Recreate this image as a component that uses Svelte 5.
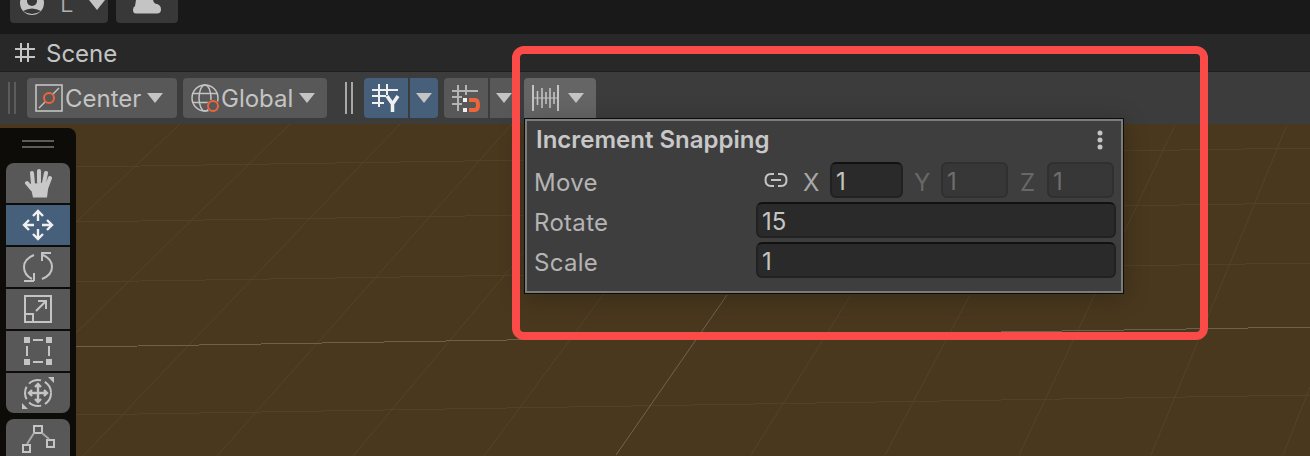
<script lang="ts">
  // perspective grid of the scene view, coordinates relative to the scene
  const horizontals = [
    [76, 43, 1310, 24],
    [76, 98, 1310, 79],
    [76, 158, 1310, 139],
    [76, 291, 1310, 271]
  ];
  const diagonals = [
    [180, 0, 76, 98],
    [290, 0, 76, 209],
    [400, 0, 83, 332],
    [512, 0, 217, 332],
    [530, 121, 353, 332],
    [640, 121, 484, 332],
    [851, 171, 751, 331],
    [970, 171, 885, 331],
    [1175, 1, 1019, 331],
    [1287, 1, 1151, 331],
    [1310, 263, 1283, 331]
  ];
</script>

<div class="app">
  <div class="topbar">
    <button class="top-btn account">
      <svg width="26" height="23" viewBox="0 0 26 23">
        <circle cx="13" cy="3" r="12" fill="#c4c4c4" />
        <circle cx="13" cy="1" r="5" fill="#383838" />
        <path d="M4 11 Q13 6 22 11 Q13 17 4 11Z" fill="#383838" />
      </svg>
      <span class="letter">L</span>
      <i class="caret top-caret"></i>
    </button>
    <button class="top-btn cloud">
      <svg width="28" height="14" viewBox="0 0 28 14">
        <path d="M3 13.500Q0 13.500 0 10Q0 7 2 6L3 0H20Q21 4 24 4Q28 5 28 9.500Q28 13.500 24 13.500Z" fill="#c4c4c4" />
      </svg>
    </button>
  </div>

  <div class="tabs">
    <svg class="hash" width="20" height="20" viewBox="0 0 20 20">
      <path d="M6 0V19M13 0V19M0 6H20M0 14H20" stroke="#c4c4c4" stroke-width="2" fill="none" />
    </svg>
    <span>Scene</span>
  </div>

  <div class="toolbar">
    <div class="handle dim"></div>
    <button class="tbtn center">
      <svg width="28" height="28" viewBox="0 0 28 28">
        <rect x="1" y="1" width="26" height="26" fill="none" stroke="#c4c4c4" stroke-width="1.600" />
        <path d="M4 24L10 18M18 10L24 4" stroke="#c4c4c4" stroke-width="1.400" />
        <circle cx="14" cy="14" r="5" fill="none" stroke="#f0643a" stroke-width="2" />
      </svg>
      <span>Center</span>
      <i class="caret"></i>
    </button>
    <button class="tbtn global">
      <svg width="28" height="28" viewBox="0 0 28 28">
        <g fill="none" stroke="#c4c4c4" stroke-width="1.500">
          <circle cx="14" cy="14" r="13" />
          <ellipse cx="14" cy="14" rx="6" ry="13" />
          <path d="M2 9.500H26M2 18.500H26" />
        </g>
        <circle cx="22" cy="22" r="6.500" fill="#585858" />
        <circle cx="22" cy="22" r="5" fill="none" stroke="#f0643a" stroke-width="2" />
      </svg>
      <span>Global</span>
      <i class="caret"></i>
    </button>
    <div class="handle"></div>

    <div class="split">
      <button class="tbtn icon active">
        <svg width="30" height="30" viewBox="0 0 30 30">
          <path d="M8 1V24M16 1V12M1 7H27M1 13H15M1 20H13" stroke="#f0f0f0" stroke-width="2" fill="none" />
          <path d="M16 13L21.500 21L27 13M21.500 21V29" stroke="#f0f0f0" stroke-width="3.500" fill="none" />
        </svg>
      </button>
      <button class="tbtn drop active"><i class="caret"></i></button>
    </div>

    <div class="split second">
      <button class="tbtn icon">
        <svg width="30" height="30" viewBox="0 0 30 30">
          <path d="M7 2V28M15 2V12M1 8H27M1 14H11M1 21H11" stroke="#b4b4b4" stroke-width="2" fill="none" />
          <rect x="12" y="15" width="4" height="4" fill="#f0f0f0" />
          <rect x="12" y="25" width="4" height="4" fill="#f0f0f0" />
          <path d="M18 17H24Q27 17 27 22Q27 27 24 27H18" stroke="#f0643a" stroke-width="4" fill="none" />
        </svg>
      </button>
      <button class="tbtn drop"><i class="caret"></i></button>
    </div>

    <button class="tbtn increment">
      <svg width="27" height="28" viewBox="0 0 27 28">
        <path d="M1 1V27M26 1V27" stroke="#c4c4c4" stroke-width="2" />
        <path d="M1 14H26" stroke="#c4c4c4" stroke-width="1" />
        <path d="M5.500 7V21M10 4V24M14 8V20M18 4V24M22 8V20" stroke="#c4c4c4" stroke-width="1.600" />
      </svg>
      <i class="caret"></i>
    </button>
  </div>

  <div class="scene">
    <svg class="grid" width="1310" height="332" viewBox="0 0 1310 332">
      {#each horizontals as l}
        <line x1={l[0]} y1={l[1]} x2={l[2]} y2={l[3]} stroke="#524129" shape-rendering="crispEdges" />
      {/each}
      {#each diagonals as l}
        <line x1={l[0]} y1={l[1]} x2={l[2]} y2={l[3]} stroke="#54432b" />
      {/each}
      <line x1="727" y1="171" x2="616" y2="331" stroke="#6f6350" />
      <line x1="76" y1="223" x2="1310" y2="203" stroke="#6b614f" shape-rendering="crispEdges" />
    </svg>

    <div class="tools">
      <div class="grip"></div>
      <div class="tool-group">
        <button class="tool">
          <svg width="28" height="30" viewBox="0 0 28 30">
            <path d="M9 16L8 5M15 14V3M20 15L22 5M23 18L26 10M8 21L3 15" stroke="#c8c8c8" stroke-width="4" stroke-linecap="round" fill="none" />
            <path d="M6 16L25 14L23 29.500H9Z" fill="#c8c8c8" />
          </svg>
        </button>
        <button class="tool active">
          <svg width="32" height="32" viewBox="0 0 32 32">
            <path d="M16 2V12M16 20V30M2 16H12M20 16H30M11 7L16 2L21 7M11 25L16 30L21 25M7 11L2 16L7 21M25 11L30 16L25 21" stroke="#f0f0f0" stroke-width="2.400" fill="none" />
          </svg>
        </button>
        <button class="tool">
          <svg width="30" height="30" viewBox="0 0 30 30">
            <path d="M11 3Q1 7 1 15Q1 23 9 27M19 27Q29 23 29 15Q29 7 20 3" stroke="#c4c4c4" stroke-width="2" fill="none" />
            <path d="M18 1H28M19 1V9M11 29H1M11 29V21" stroke="#c4c4c4" stroke-width="2" fill="none" />
          </svg>
        </button>
        <button class="tool">
          <svg width="30" height="30" viewBox="0 0 30 30">
            <rect x="2" y="2" width="26" height="26" fill="none" stroke="#c4c4c4" stroke-width="2" />
            <rect x="2" y="20" width="8" height="8" fill="none" stroke="#c4c4c4" stroke-width="2" />
            <path d="M13 17L22 8M15 7H23V15" stroke="#c4c4c4" stroke-width="2" fill="none" />
          </svg>
        </button>
        <button class="tool">
          <svg width="30" height="30" viewBox="0 0 30 30">
            <rect x="1" y="1" width="6" height="6" fill="#c4c4c4" />
            <rect x="23" y="1" width="6" height="6" fill="#c4c4c4" />
            <rect x="1" y="23" width="6" height="6" fill="#c4c4c4" />
            <rect x="23" y="23" width="6" height="6" fill="#c4c4c4" />
            <path d="M10 4H20M10 26H20M4 10V20M26 10V20" stroke="#c4c4c4" stroke-width="2" />
          </svg>
        </button>
        <button class="tool">
          <svg width="34" height="34" viewBox="0 0 34 34">
            <path d="M27 1H33V7ZM1 33V27L7 33Z" fill="#c4c4c4" />
            <circle cx="17" cy="17" r="13" fill="none" stroke="#c4c4c4" stroke-width="2" stroke-dasharray="13 4" />
            <path d="M17 8V26M8 17H26M14 11L17 8L20 11M14 23L17 26L20 23M11 14L8 17L11 20M23 14L26 17L23 20" stroke="#c4c4c4" stroke-width="2.400" fill="none" />
          </svg>
        </button>
      </div>
      <button class="tool custom">
        <svg width="34" height="36" viewBox="0 0 34 36">
          <rect x="13" y="5" width="8" height="7" fill="none" stroke="#c4c4c4" stroke-width="2" />
          <rect x="2" y="24" width="7" height="7" fill="none" stroke="#c4c4c4" stroke-width="2" />
          <rect x="26" y="19" width="7" height="7" fill="none" stroke="#c4c4c4" stroke-width="2" />
          <path d="M13 12L6 23M21 12L28 18" stroke="#a8a8a8" stroke-width="2" />
        </svg>
      </button>
    </div>
  </div>

  <div class="popup">
    <div class="popup-head">
      <span class="title">Increment Snapping</span>
      <svg width="6" height="20" viewBox="0 0 6 20">
        <circle cx="3" cy="3" r="2.500" fill="#c4c4c4" />
        <circle cx="3" cy="10" r="2.500" fill="#c4c4c4" />
        <circle cx="3" cy="17" r="2.500" fill="#c4c4c4" />
      </svg>
    </div>
    <div class="row">
      <span class="label">Move</span>
      <div class="move-fields">
        <svg class="link" width="24" height="16" viewBox="0 0 24 16">
          <path d="M10 2H7Q1.500 2 1.500 8Q1.500 14 7 14H10M14 2H17Q22.500 2 22.500 8Q22.500 14 17 14H14M7 8H17" stroke="#c4c4c4" stroke-width="2" fill="none" />
        </svg>
        <span class="axis first">X</span>
        <div class="field small x">1</div>
        <span class="axis off">Y</span>
        <div class="field small off">1</div>
        <span class="axis off last">Z</span>
        <div class="field small off">1</div>
      </div>
    </div>
    <div class="row">
      <span class="label">Rotate</span>
      <div class="field">15</div>
    </div>
    <div class="row">
      <span class="label">Scale</span>
      <div class="field">1</div>
    </div>
  </div>

  <div class="callout"></div>
</div>

<style>
  :global(body) {
    margin: 0;
    background: #191919;
  }
  .app {
    position: relative;
    width: 1310px;
    height: 456px;
    overflow: hidden;
    display: flex;
    flex-direction: column;
    font-family: Inter, "Noto Sans", sans-serif;
    font-size: 24px;
    color: #c4c4c4;
  }
  button {
    font: inherit;
    color: inherit;
    border: 0;
    padding: 0;
    margin: 0;
  }
  .caret {
    display: block;
    width: 0;
    height: 0;
    border-left: 8.500px solid transparent;
    border-right: 8.500px solid transparent;
    border-top: 10px solid #c4c4c4;
  }
  .topbar {
    height: 34px;
    flex: none;
    box-sizing: border-box;
    padding-left: 10px;
    display: flex;
    gap: 8px;
    align-items: flex-start;
    background: #191919;
  }
  .top-btn {
    height: 23px;
    background: #383838;
    border-radius: 0 0 4px 4px;
    display: flex;
    align-items: flex-start;
  }
  .account {
    width: 98px;
    padding-left: 9px;
    box-sizing: border-box;
    overflow: hidden;
  }
  .letter {
    margin-left: 15px;
    line-height: 16px;
    margin-top: -4px;
    font-weight: 300;
    color: #b0b0b0;
  }
  .top-caret {
    margin-left: 15px;
  }
  .cloud {
    width: 62px;
    justify-content: center;
  }
  .tabs {
    height: 38px;
    flex: none;
    box-sizing: border-box;
    display: flex;
    align-items: center;
    gap: 11px;
    padding: 2px 0 0 15px;
    background: #282828;
    border-bottom: 1px solid #1f1f1f;
  }
  .hash {
    margin-top: -2px;
  }
  .toolbar {
    height: 52px;
    flex: none;
    box-sizing: border-box;
    display: flex;
    align-items: flex-start;
    padding-top: 6px;
    background: #3c3c3c;
  }
  .handle {
    width: 2px;
    height: 32px;
    margin: 4px 11px 0 18px;
    border-left: 2px solid #a8a8a8;
    border-right: 2px solid #a8a8a8;
    padding-right: 2px;
  }
  .handle.dim {
    margin-left: 8px;
    margin-right: 11px;
    border-color: #5c5c5c;
  }
  .tbtn {
    height: 40px;
    background: #585858;
    border-radius: 4px;
    display: flex;
    align-items: center;
    flex: none;
  }
  .center {
    width: 150px;
    padding-left: 8px;
    gap: 2px;
    box-sizing: border-box;
    margin-right: 6px;
  }
  .center .caret,
  .global .caret {
    margin-left: 4px;
  }
  .global {
    width: 144px;
    padding-left: 8px;
    gap: 2px;
    box-sizing: border-box;
  }
  .split {
    display: flex;
    gap: 2px;
  }
  .split.second {
    margin-left: 6px;
  }
  .icon {
    width: 44px;
    justify-content: center;
    border-radius: 4px 0 0 4px;
  }
  .drop {
    width: 28px;
    justify-content: center;
    border-radius: 0 4px 4px 0;
  }
  .tbtn.active {
    background: #46607c;
  }
  .increment {
    width: 72px;
    margin-left: 6px;
    padding-left: 8px;
    box-sizing: border-box;
    gap: 9px;
    background: #656565;
    border-radius: 4px 4px 0 0;
  }
  .scene {
    flex: 1;
    position: relative;
    background: #49381e;
    overflow: hidden;
  }
  .grid {
    position: absolute;
    left: 0;
    top: 0;
  }
  .tools {
    position: relative;
    width: 76px;
    margin-top: 4px;
    height: 328px;
    box-sizing: border-box;
    padding: 1px 6px 0;
    background: #0e0c08;
    border-radius: 0 8px 0 0;
  }
  .grip {
    height: 4px;
    margin: 11px 16px 15px;
    border-top: 2px solid #5c5c5c;
    border-bottom: 2px solid #5c5c5c;
  }
  .tool-group {
    display: flex;
    flex-direction: column;
    gap: 2px;
  }
  .tool {
    width: 64px;
    height: 40px;
    background: #585858;
    display: flex;
    align-items: center;
    justify-content: center;
    flex: none;
  }
  .tool-group .tool:first-child {
    border-radius: 8px 8px 0 0;
  }
  .tool-group .tool:last-child {
    border-radius: 0 0 8px 8px;
  }
  .tool.active {
    background: #46607c;
  }
  .tool.custom {
    margin-top: 6px;
    border-radius: 8px 8px 0 0;
    align-items: flex-start;
    padding-top: 2px;
    box-sizing: border-box;
  }
  .popup {
    position: absolute;
    left: 524px;
    top: 118px;
    width: 600px;
    height: 176px;
    box-sizing: border-box;
    padding: 4px 9px 0;
    background: #3e3e3e;
    border: 1px solid #0c0c0c;
    box-shadow: inset 0 0 0 2px #7c7c7c, 0 4px 24px rgba(0, 0, 0, 0.24);
  }
  .popup-head {
    display: flex;
    align-items: center;
    justify-content: space-between;
    box-sizing: border-box;
    height: 34px;
    padding: 0 11px 1px 2px;
    margin-bottom: 3px;
  }
  .title {
    font-weight: 600;
    color: #c8c8c8;
  }
  .row {
    display: grid;
    grid-template-columns: 222px 360px;
    align-items: center;
    height: 40px;
  }
  .label {
    color: #b4b4b4;
    letter-spacing: 0.3px;
    padding-top: 4px;
  }
  .move-fields {
    display: flex;
    align-items: center;
  }
  .link {
    margin-left: 8px;
  }
  .axis {
    width: 14px;
    text-align: center;
    color: #a8a8a8;
    padding-top: 4px;
  }
  .axis.first {
    margin-left: 15px;
    margin-right: 13px;
  }
  .axis.off {
    color: #686868;
    margin-left: 11px;
    margin-right: 13px;
  }
  .axis.last {
    margin-left: 12px;
  }
  .field {
    height: 36px;
    box-sizing: border-box;
    padding-left: 4px;
    line-height: 35px;
    background: #2a2a2a;
    border: 2px solid #212121;
    border-top-color: #111;
    border-radius: 6px;
    color: #c4c4c4;
  }
  .field.small {
    width: 67px;
  }
  .field.x {
    width: 73px;
  }
  .field.off {
    background: #373737;
    border-color: #303030;
    color: #6e6e6e;
  }
  .callout {
    position: absolute;
    left: 512px;
    top: 46px;
    width: 696px;
    height: 294px;
    box-sizing: border-box;
    border: 8px solid #fb4b48;
    border-radius: 12px;
    pointer-events: none;
  }
</style>
